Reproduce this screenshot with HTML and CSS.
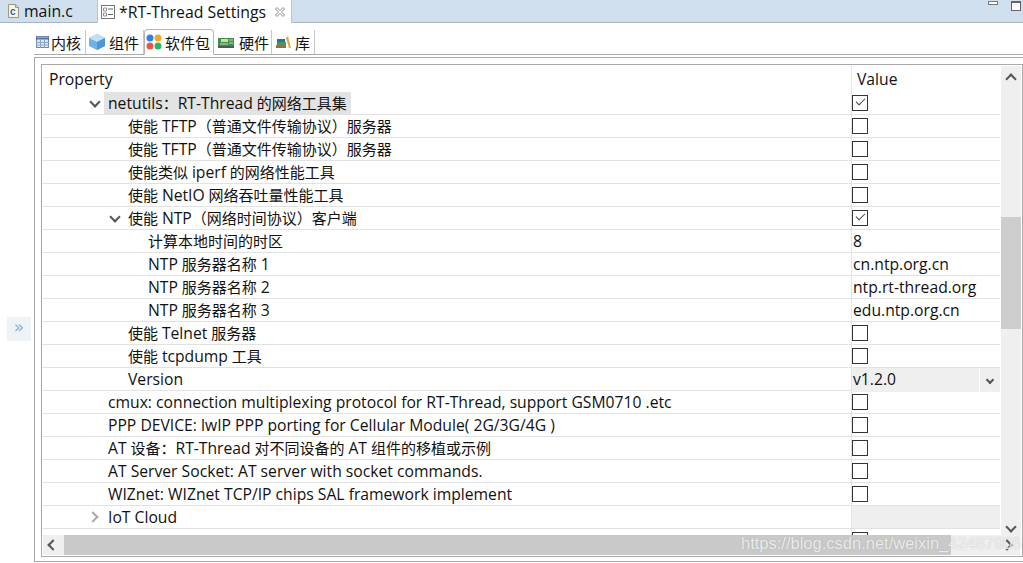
FILE: index.html
```html
<!DOCTYPE html>
<html lang="zh">
<head>
    <meta charset="UTF-8">
    <title>RT-Thread Settings</title>
    <link rel="stylesheet" href="styles.css">
</head>
<body>
    <div class="editor-tabs">
        <div class="editor-tab">
            <svg class="file-icon" width="16" height="16" viewBox="0 0 16 16"><path d="M3.500 1.500h7l3 3v10h-10z" fill="#f6f3e6" stroke="#9a9a80"/><path d="M10.500 1.500v3h3" fill="none" stroke="#9a9a80"/><text x="5" y="12" font-size="10" font-family="Liberation Sans" font-weight="bold" fill="#3f5f9f">c</text></svg>
            <span>main.c</span>
        </div>
        <div class="editor-tab active">
            <svg class="file-icon" width="16" height="16" viewBox="0 0 16 16"><rect x="1.500" y="1.500" width="13" height="13" fill="#fff" stroke="#777"/><path d="M3.500 4h3v3h-3zM3.500 9h3v3h-3z" fill="#fff" stroke="#777" stroke-width=".8"/><path d="M8 5h5M8 10.500h5" stroke="#666"/></svg>
            <span>*RT-Thread Settings</span>
            <svg class="close-icon" width="12" height="12" viewBox="0 0 12 12"><path d="M1.500 3l1.500-1.500 3 3 3-3 1.500 1.500-3 3 3 3-1.500 1.500-3-3-3 3-1.500-1.500 3-3z" fill="#fff" stroke="#8a8a8a"/></svg>
        </div>
        <div class="window-btns">
            <span class="btn-min"></span>
            <span class="btn-max"></span>
        </div>
    </div>

    <div class="content">
        <div class="gutter">
            <div class="expand-btn">»</div>
        </div>
        <div class="editor">
            <div class="section-tabs">
                <div class="section-tab">
                    <svg width="16" height="16" viewBox="0 0 16 16"><rect x="1.500" y="2.500" width="12" height="11" fill="#dfe7f3" stroke="#6f87ad"/><path d="M1 4.500h13" stroke="#4f6d9e" stroke-width="2"/><path d="M5.500 6v8M9.500 6v8M1 8.500h13M1 11h13" stroke="#8fa5c6"/></svg>
                    <span>内核</span>
                </div>
                <div class="section-tab">
                    <svg width="18" height="18" viewBox="0 0 18 18"><path d="M9 1l8 4v8l-8 4-8-4V5z" fill="#6fb2e6"/><path d="M9 1l8 4-8 4-8-4z" fill="#bfe0f7"/><path d="M9 9v8l8-4V5z" fill="#4d97d8"/></svg>
                    <span>组件</span>
                </div>
                <div class="section-tab active">
                    <svg width="16" height="16" viewBox="0 0 16 16"><circle cx="4" cy="4" r="3.500" fill="#2f80ed"/><circle cx="12" cy="4" r="3.500" fill="#f5a623"/><circle cx="4" cy="12" r="3.500" fill="#eb5545"/><circle cx="12" cy="12" r="3.500" fill="#2fb465"/></svg>
                    <span>软件包</span>
                </div>
                <div class="section-tab">
                    <svg width="18" height="16" viewBox="0 0 18 16"><rect x="1" y="4" width="16" height="8" fill="#3f8f4f"/><rect x="4" y="5" width="7" height="3" fill="#d8d8a0"/><path d="M1 12h16v2H1z" fill="#555"/><path d="M12 6h4M12 9h4M3 10h8" stroke="#c8e0b0"/></svg>
                    <span>硬件</span>
                </div>
                <div class="section-tab">
                    <svg width="16" height="16" viewBox="0 0 16 16"><rect x="0" y="11" width="10" height="3" fill="#b5652a"/><rect x="1" y="8" width="9" height="3" fill="#3f9a6a"/><rect x="1" y="5" width="8" height="3" fill="#2f6f9f"/><path d="M10 4l2-2 3 12h-2z" fill="#e8a83a"/></svg>
                    <span>库</span>
                </div>
            </div>

            <div class="panel">
                <div class="table-box">
                    <div class="table-area">
                        <div class="table-main">
                            <div class="head-row">
                                <div class="col-name"><span class="en">Property</span></div>
                                <div class="col-value"><span class="en">Value</span></div>
                            </div>

                            <div class="row">
                                <div class="col-name lv1"><i class="arrow open"></i><span class="selected"><span class="en">netutils</span>：<span class="en">RT-Thread</span> 的网络工具集</span></div>
                                <div class="col-value"><i class="check on"></i></div>
                            </div>
                            <div class="row">
                                <div class="col-name lv2">使能 <span class="en">TFTP</span>（普通文件传输协议）服务器</div>
                                <div class="col-value"><i class="check"></i></div>
                            </div>
                            <div class="row">
                                <div class="col-name lv2">使能 <span class="en">TFTP</span>（普通文件传输协议）服务器</div>
                                <div class="col-value"><i class="check"></i></div>
                            </div>
                            <div class="row">
                                <div class="col-name lv2">使能类似 <span class="en">iperf</span> 的网络性能工具</div>
                                <div class="col-value"><i class="check"></i></div>
                            </div>
                            <div class="row">
                                <div class="col-name lv2">使能 <span class="en">NetIO</span> 网络吞吐量性能工具</div>
                                <div class="col-value"><i class="check"></i></div>
                            </div>
                            <div class="row">
                                <div class="col-name lv2 has-arrow"><i class="arrow open"></i>使能 <span class="en">NTP</span>（网络时间协议）客户端</div>
                                <div class="col-value"><i class="check on"></i></div>
                            </div>
                            <div class="row">
                                <div class="col-name lv3">计算本地时间的时区</div>
                                <div class="col-value text"><span class="en">8</span></div>
                            </div>
                            <div class="row">
                                <div class="col-name lv3"><span class="en">NTP</span> 服务器名称 <span class="en">1</span></div>
                                <div class="col-value text"><span class="en">cn.ntp.org.cn</span></div>
                            </div>
                            <div class="row">
                                <div class="col-name lv3"><span class="en">NTP</span> 服务器名称 <span class="en">2</span></div>
                                <div class="col-value text"><span class="en">ntp.rt-thread.org</span></div>
                            </div>
                            <div class="row">
                                <div class="col-name lv3"><span class="en">NTP</span> 服务器名称 <span class="en">3</span></div>
                                <div class="col-value text"><span class="en">edu.ntp.org.cn</span></div>
                            </div>
                            <div class="row">
                                <div class="col-name lv2">使能 <span class="en">Telnet</span> 服务器</div>
                                <div class="col-value"><i class="check"></i></div>
                            </div>
                            <div class="row">
                                <div class="col-name lv2">使能 <span class="en">tcpdump</span> 工具</div>
                                <div class="col-value"><i class="check"></i></div>
                            </div>
                            <div class="row">
                                <div class="col-name lv2"><span class="en">Version</span></div>
                                <div class="col-value combo"><span class="en">v1.2.0</span><b><i class="arrow open"></i></b></div>
                            </div>
                            <div class="row">
                                <div class="col-name lv1"><span class="en">cmux: connection multiplexing protocol for RT-Thread, support GSM0710 .etc</span></div>
                                <div class="col-value"><i class="check"></i></div>
                            </div>
                            <div class="row">
                                <div class="col-name lv1"><span class="en">PPP DEVICE: lwIP PPP porting for Cellular Module( 2G/3G/4G )</span></div>
                                <div class="col-value"><i class="check"></i></div>
                            </div>
                            <div class="row">
                                <div class="col-name lv1"><span class="en">AT</span> 设备：<span class="en">RT-Thread</span> 对不同设备的 <span class="en">AT</span> 组件的移植或示例</div>
                                <div class="col-value"><i class="check"></i></div>
                            </div>
                            <div class="row">
                                <div class="col-name lv1"><span class="en">AT Server Socket: AT server with socket commands.</span></div>
                                <div class="col-value"><i class="check"></i></div>
                            </div>
                            <div class="row">
                                <div class="col-name lv1"><span class="en">WIZnet: WIZnet TCP/IP chips SAL framework implement</span></div>
                                <div class="col-value"><i class="check"></i></div>
                            </div>
                            <div class="row">
                                <div class="col-name lv1"><i class="arrow closed"></i><span class="en">IoT Cloud</span></div>
                                <div class="col-value empty"></div>
                            </div>
                            <div class="row">
                                <div class="col-name lv1"></div>
                                <div class="col-value"><i class="check"></i></div>
                            </div>
                        </div>
                        <div class="vscroll">
                            <i class="arrow up"></i>
                            <div class="vtrack"><div class="vthumb"></div></div>
                            <i class="arrow open"></i>
                        </div>
                    </div>
                    <div class="hscroll">
                        <i class="arrow left"></i>
                        <div class="hthumb"></div>
                        <i class="arrow closed"></i>
                    </div>
                </div>
            </div>
        </div>
    </div>

    <div class="watermark">https://blog.csdn.net/weixin_42487906</div>
</body>
</html>
```

FILE: styles.css
```css
html, body {
    height: 100%;
}
body {
    font-family: "Open Sans", "Noto Sans CJK SC", sans-serif;
    font-size: 15px;
    margin: 0;
    height: 563px;
    overflow: hidden;
    background: #fff;
    color: #111;
    display: flex;
    flex-direction: column;
}
.en {
    font-size: 15.700px;
}
.editor-tabs {
    height: 22px;
    flex: none;
    display: flex;
    background: #d0dfee;
    border-bottom: 1px solid #a9b4c4;
    position: relative;
}
.editor-tab {
    display: flex;
    align-items: center;
    gap: 3px;
    padding-left: 5px;
    width: 97px;
    box-sizing: border-box;
    height: 22px;
    font-size: 15.800px;
    white-space: nowrap;
}
.editor-tab.active {
    background: #fff;
    width: 195px;
    height: 23px;
    border-left: 1px solid #b6c6d8;
    border-right: 1px solid #b6c6d8;
    padding-left: 2px;
}
.editor-tab .close-icon {
    margin-left: 5px;
}
.window-btns {
    margin-left: auto;
    display: flex;
    gap: 13px;
    padding: 1px 1px 0 0;
}
.btn-min {
    width: 8px;
    height: 2px;
    border: 1px solid #777;
    background: #fff;
}
.btn-max {
    width: 8px;
    height: 7px;
    border: 1px solid #666;
    border-top-width: 2px;
    background: #fff;
    margin-right: 1px;
}
.content {
    flex: 1;
    display: flex;
    min-height: 0;
}
.gutter {
    width: 34px;
    flex: none;
    position: relative;
}
.expand-btn {
    position: absolute;
    left: 7px;
    top: 294px;
    width: 24px;
    height: 24px;
    background: #eef3f7;
    color: #8fb0d6;
    font-family: "DejaVu Sans", sans-serif;
    font-size: 17px;
    line-height: 21px;
    text-align: center;
}
.editor {
    flex: 1;
    min-width: 0;
    display: flex;
    flex-direction: column;
}
.section-tabs {
    height: 25px;
    margin-top: 6px;
    display: flex;
    align-items: flex-end;
    border-bottom: 1px solid #aaa;
}
.section-tab {
    height: 24px;
    box-sizing: border-box;
    display: flex;
    align-items: center;
    gap: 3px;
    border-right: 1px solid #c8c8c8;
    font-size: 15px;
    white-space: nowrap;
}
.section-tab:nth-child(1) { width: 52px; padding-left: 1px; gap: 0; }
.section-tab:nth-child(2) { width: 58px; padding-left: 2px; }
.section-tab:nth-child(3) { width: 70px; padding-left: 1px; }
.section-tab:nth-child(4) { width: 58px; padding-left: 3px; gap: 4px; }
.section-tab:nth-child(5) { width: 43px; padding-left: 4px; }
.section-tab.active {
    background: #fff;
    border: 1px solid #b5b5b5;
    border-bottom: 1px solid #fff;
    border-radius: 4px 4px 0 0;
    margin-bottom: -1px;
    height: 26px;
}
.panel {
    margin-top: 2px;
    flex: 1;
    min-height: 0;
    margin-bottom: 1px;
    border: 1px solid #aaa;
    border-right: none;
    padding: 6px 0 4px 6px;
    display: flex;
}
.table-box {
    flex: 1;
    min-width: 0;
    border: 1px solid #aaa;
    padding: 1px;
    display: flex;
    flex-direction: column;
}
.table-area {
    flex: 1;
    min-height: 0;
    display: flex;
}
.table-main {
    flex: 1;
    min-width: 0;
    overflow: hidden;
}
.head-row {
    height: 26px;
    display: grid;
    grid-template-columns: 808px 1fr;
    align-items: center;
}
.head-row .col-name {
    padding-left: 6px;
}
.head-row .col-value {
    border-left: 1px solid #e4e4e4;
    height: 100%;
    line-height: 26px;
    padding-left: 5px;
}
.row {
    height: 22px;
    border-bottom: 1px solid #e2e2e2;
    display: grid;
    grid-template-columns: 808px 1fr;
    line-height: 22px;
}
.col-name {
    position: relative;
    white-space: nowrap;
}
.lv1 { padding-left: 65px; }
.lv2 { padding-left: 85px; }
.lv3 { padding-left: 105px; }
.selected {
    background: #e3e3e3;
    display: inline-block;
    height: 22px;
    margin-left: -4px;
    padding: 0 4px;
}
.col-value {
    border-left: 1px solid #e4e4e4;
    display: flex;
    align-items: center;
}
.col-value.text {
    padding-left: 1px;
    padding-bottom: 2px;
}
.col-value.combo {
    background: #efefef;
    justify-content: space-between;
    padding-left: 1px;
}
.combo .en {
    padding-bottom: 2px;
}
.combo b {
    width: 20px;
    height: 100%;
    border-left: 1px solid #fff;
    display: flex;
    align-items: center;
    justify-content: center;
    font-weight: normal;
}
.col-value.empty {
    background: #efefef;
}
.check {
    display: block;
    position: relative;
    width: 14px;
    height: 14px;
    border: 1px solid #333;
    background: #fff;
}
.check.on::after {
    content: "";
    position: absolute;
    left: 3px;
    top: 2px;
    width: 8px;
    height: 4px;
    border-left: 1.500px solid #444;
    border-bottom: 1.500px solid #444;
    transform: rotate(-45deg);
}
.arrow {
    display: block;
    width: 6px;
    height: 6px;
    border-right: 2px solid #555;
    border-bottom: 2px solid #555;
    box-sizing: border-box;
}
.arrow.open { transform: rotate(45deg); }
.arrow.up { transform: rotate(225deg); }
.arrow.left { transform: rotate(135deg); }
.arrow.closed { transform: rotate(-45deg); }
.col-name .arrow {
    position: absolute;
    left: 48px;
    top: 6px;
    width: 8px;
    height: 8px;
}
.has-arrow .arrow {
    left: 68px;
}
.col-name .arrow.closed {
    border-color: #aaa;
    top: 7px;
    left: 46px;
}
.vscroll {
    width: 20px;
    flex: none;
    margin-left: 1px;
    background: #efefef;
    display: flex;
    flex-direction: column;
    align-items: center;
    padding: 9px 0 4px;
    box-sizing: border-box;
}
.vscroll > .arrow {
    width: 8px;
    height: 8px;
    flex: none;
}
.vtrack {
    flex: 1;
    width: 100%;
    padding-top: 134px;
}
.vthumb {
    height: 112px;
    background: #cdcdcd;
}
.hscroll {
    height: 20px;
    flex: none;
    background: #efefef;
    display: flex;
    align-items: center;
    margin-right: 1px;
}
.hscroll .arrow {
    width: 8px;
    height: 8px;
    flex: none;
}
.hscroll .arrow.left {
    margin: 0 7px 0 6px;
}
.hscroll .arrow.closed {
    margin: 0 9px 0 6px;
}
.hthumb {
    height: 100%;
    flex: 1;
    background: #c9c9c9;
    margin-right: 46px;
}
.watermark {
    position: absolute;
    left: 741px;
    top: 534px;
    font-family: "Liberation Sans", sans-serif;
    font-size: 16.500px;
    color: rgba(255, 255, 255, 0.8);
    text-shadow: 0 0 1px rgba(130, 130, 130, 0.6);
    white-space: nowrap;
}
```
